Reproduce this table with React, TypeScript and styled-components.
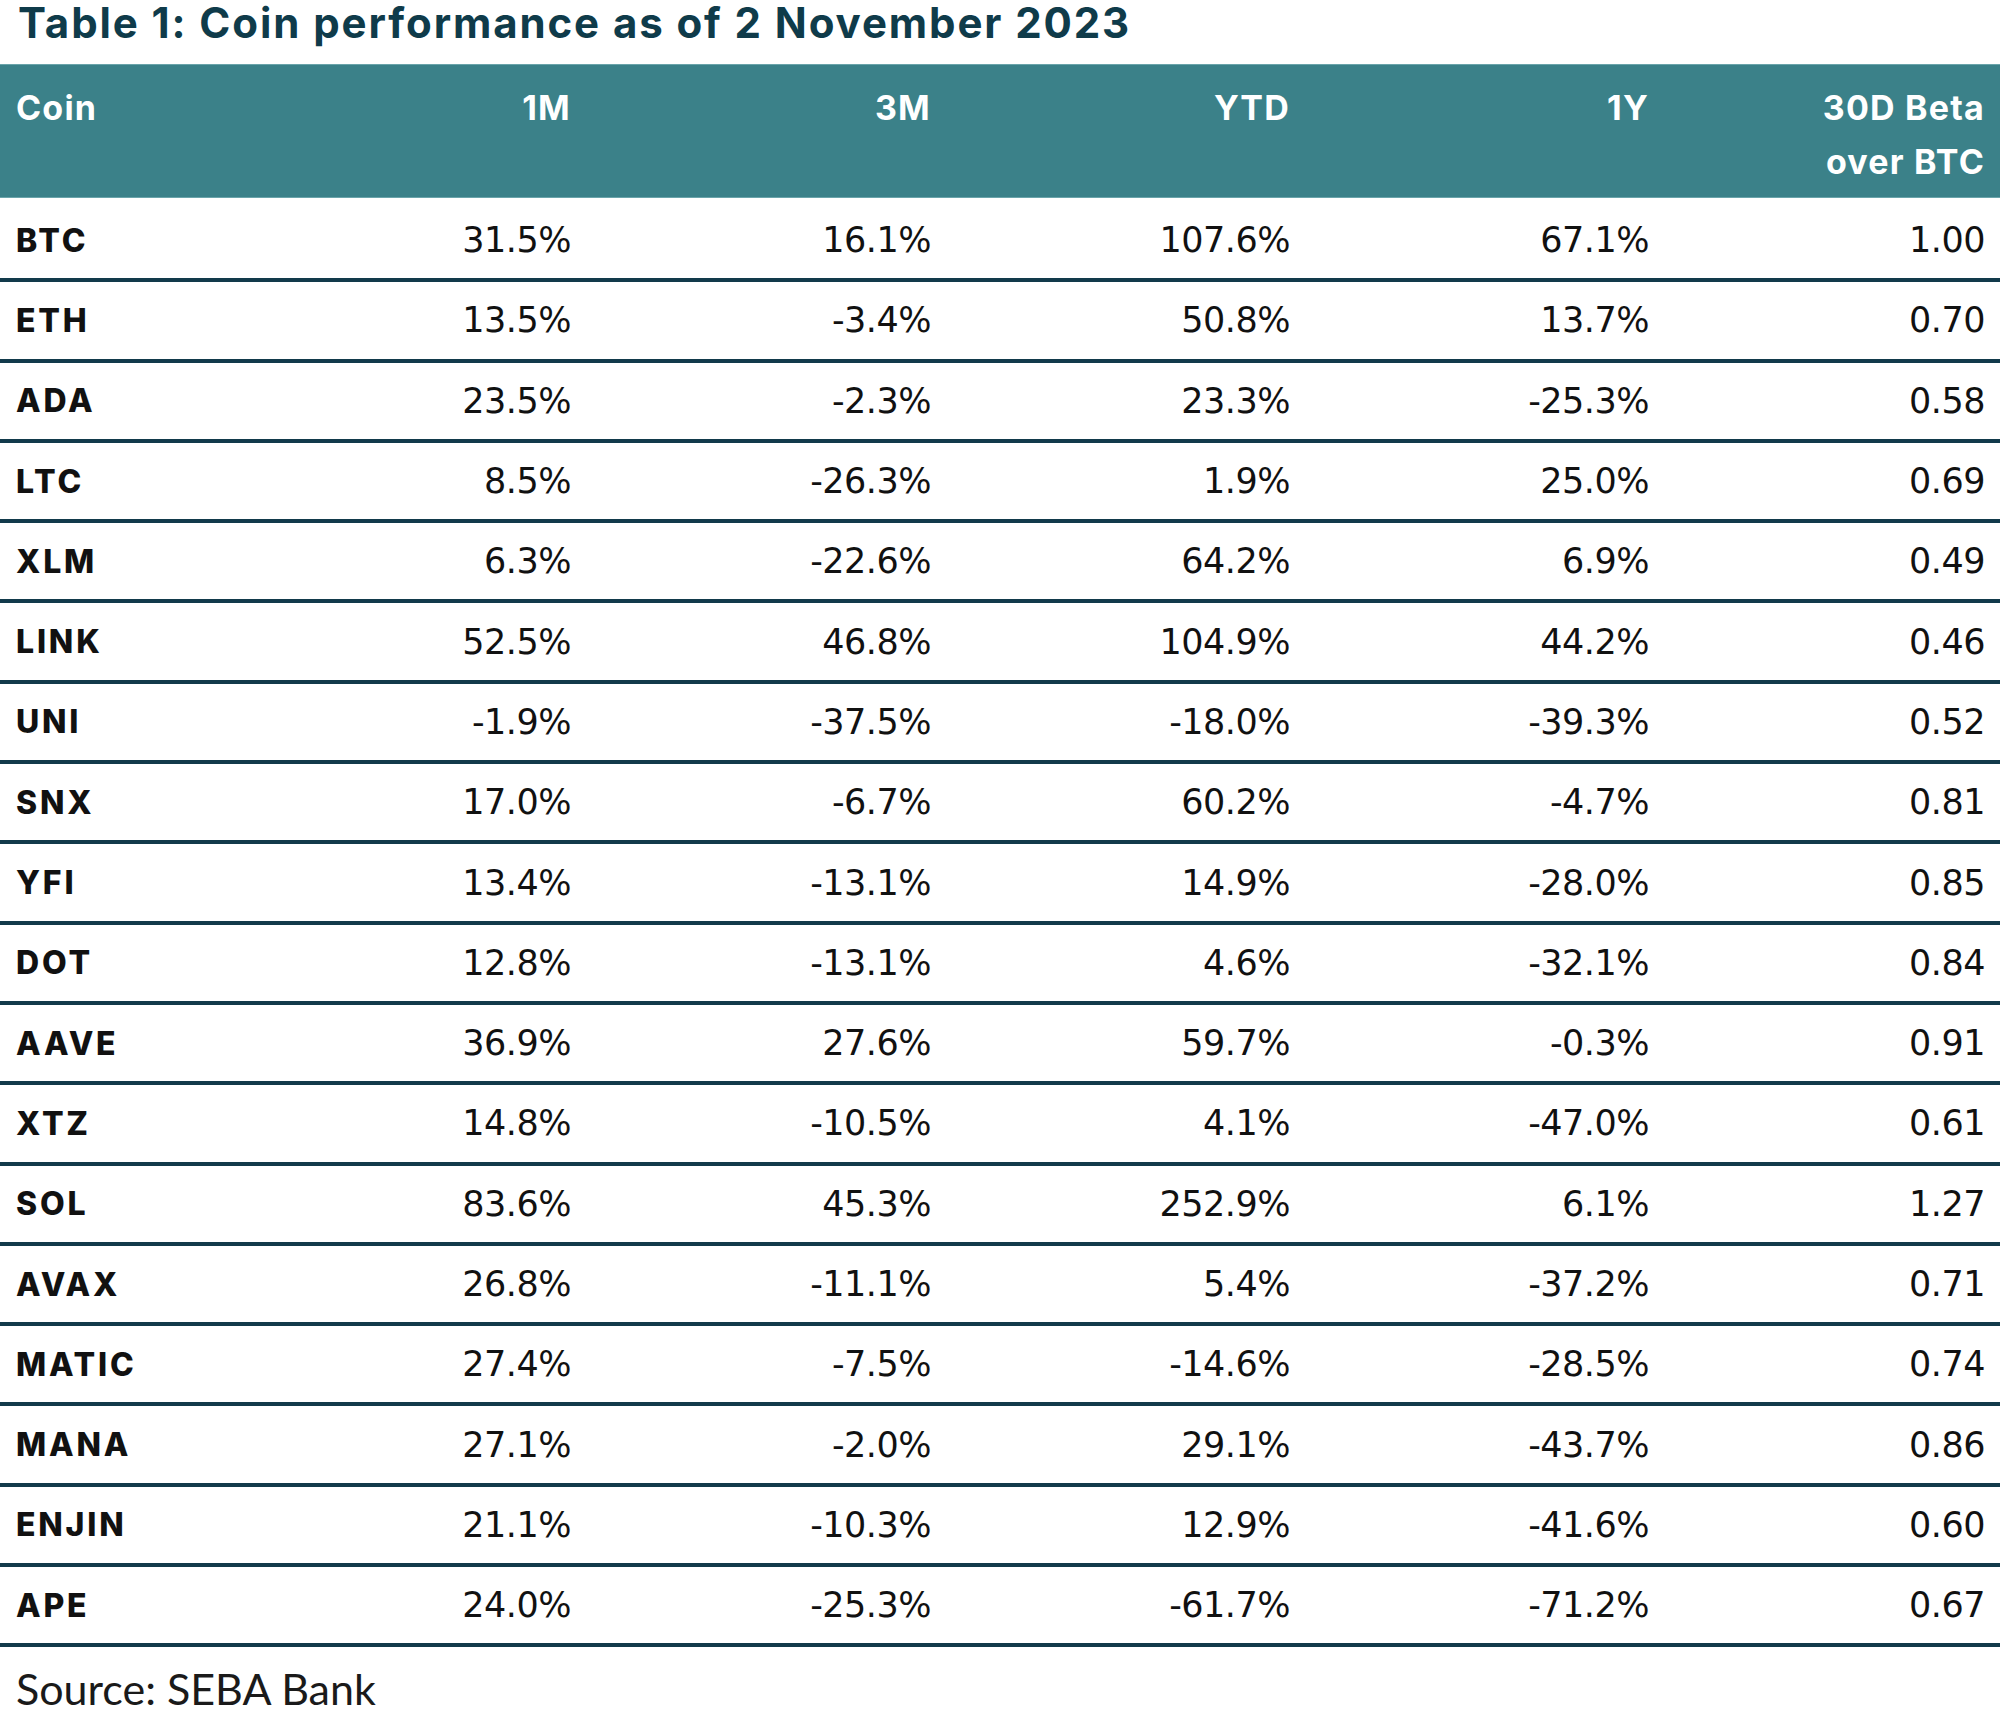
import styled, { createGlobalStyle } from "styled-components";

const GlobalStyle = createGlobalStyle`
  html, body {
    margin: 0;
    padding: 0;
    background: #ffffff;
  }
`;

const Page = styled.div`
  width: 2000px;
  font-family: Lato, "Noto Sans", sans-serif;
`;

const Title = styled.h1`
  margin: 0 0 19px 18px;
  font-family: Inter, "Noto Sans", sans-serif;
  font-size: 42px;
  line-height: 45px;
  font-weight: 700;
  color: #0f3b4a;
  letter-spacing: 1.9px;
`;

const Table = styled.div`
  display: flex;
  flex-direction: column;
`;

const columns = "226px 360px 360px 359px 359px 1fr";

const HeaderRow = styled.div`
  display: grid;
  grid-template-columns: ${columns};
  height: 134px;
  margin-bottom: 4px;
  box-sizing: border-box;
  padding-top: 16px;
  background: #3b8189;
  border-top: 1px solid #6aa4aa;
  border-bottom: 1px solid #6aa4aa;
  color: #ffffff;
  font-family: Inter, "Noto Sans", sans-serif;
  font-size: 34px;
  font-weight: 700;
  line-height: 54px;
  letter-spacing: 1.2px;
`;

const HeadCell = styled.div<{ $left?: boolean }>`
  padding: 0 15px 0 16px;
  text-align: ${(p) => (p.$left ? "left" : "right")};
`;

const Row = styled.div`
  display: grid;
  grid-template-columns: ${columns};
  align-items: center;
  height: 80.3px;
  box-sizing: border-box;
  border-bottom: 4px solid #123a4b;
`;

const CoinCell = styled.div`
  padding: 0 15px 0 16px;
  font-family: Inter, "Noto Sans", sans-serif;
  font-weight: 800;
  font-size: 32px;
  color: #111111;
  letter-spacing: 2.8px;
`;

const ValueCell = styled.div`
  padding: 0 15px 0 16px;
  text-align: right;
  font-family: "DejaVu Sans", sans-serif;
  font-size: 35px;
  color: #111111;
  letter-spacing: -0.5px;
`;

const Source = styled.div`
  margin: 20px 0 0 16px;
  font-size: 43px;
  line-height: 44px;
  color: #1a1a1a;
`;

const headers = ["1M", "3M", "YTD", "1Y"];

const rows: [string, string, string, string, string, string][] = [
  ["BTC", "31.5%", "16.1%", "107.6%", "67.1%", "1.00"],
  ["ETH", "13.5%", "-3.4%", "50.8%", "13.7%", "0.70"],
  ["ADA", "23.5%", "-2.3%", "23.3%", "-25.3%", "0.58"],
  ["LTC", "8.5%", "-26.3%", "1.9%", "25.0%", "0.69"],
  ["XLM", "6.3%", "-22.6%", "64.2%", "6.9%", "0.49"],
  ["LINK", "52.5%", "46.8%", "104.9%", "44.2%", "0.46"],
  ["UNI", "-1.9%", "-37.5%", "-18.0%", "-39.3%", "0.52"],
  ["SNX", "17.0%", "-6.7%", "60.2%", "-4.7%", "0.81"],
  ["YFI", "13.4%", "-13.1%", "14.9%", "-28.0%", "0.85"],
  ["DOT", "12.8%", "-13.1%", "4.6%", "-32.1%", "0.84"],
  ["AAVE", "36.9%", "27.6%", "59.7%", "-0.3%", "0.91"],
  ["XTZ", "14.8%", "-10.5%", "4.1%", "-47.0%", "0.61"],
  ["SOL", "83.6%", "45.3%", "252.9%", "6.1%", "1.27"],
  ["AVAX", "26.8%", "-11.1%", "5.4%", "-37.2%", "0.71"],
  ["MATIC", "27.4%", "-7.5%", "-14.6%", "-28.5%", "0.74"],
  ["MANA", "27.1%", "-2.0%", "29.1%", "-43.7%", "0.86"],
  ["ENJIN", "21.1%", "-10.3%", "12.9%", "-41.6%", "0.60"],
  ["APE", "24.0%", "-25.3%", "-61.7%", "-71.2%", "0.67"],
];

export default function App() {
  return (
    <Page>
      <GlobalStyle />
      <Title>Table 1: Coin performance as of 2 November 2023</Title>
      <Table>
        <HeaderRow>
          <HeadCell $left>Coin</HeadCell>
          {headers.map((h) => (
            <HeadCell key={h}>{h}</HeadCell>
          ))}
          <HeadCell>
            30D Beta
            <br />
            over BTC
          </HeadCell>
        </HeaderRow>
        {rows.map(([coin, ...values]) => (
          <Row key={coin}>
            <CoinCell>{coin}</CoinCell>
            {values.map((v, i) => (
              <ValueCell key={i}>{v}</ValueCell>
            ))}
          </Row>
        ))}
      </Table>
      <Source>Source: SEBA Bank</Source>
    </Page>
  );
}
